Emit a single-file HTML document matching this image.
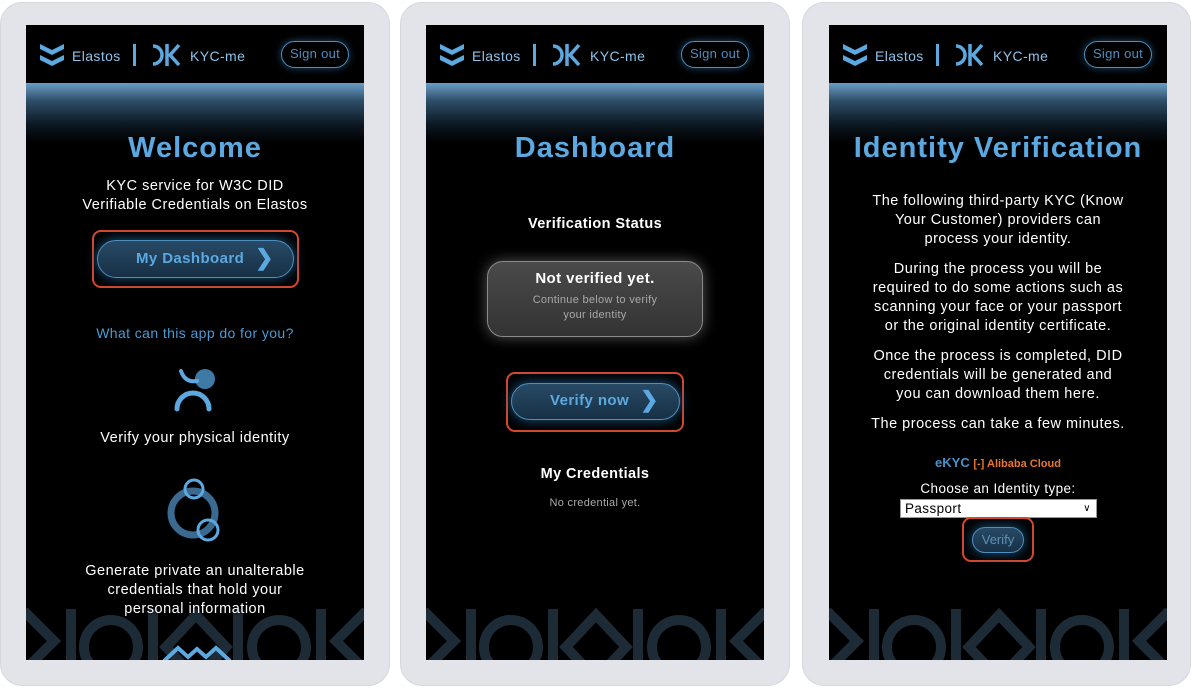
<!DOCTYPE html>
<html><head><meta charset="utf-8"><style>
*{margin:0;padding:0;box-sizing:border-box}
body{width:1194px;height:688px;background:#fff;position:relative;overflow:hidden;font-family:"Liberation Sans",sans-serif}
.card{position:absolute;top:2px;height:684px;background:#e3e4ea;border-radius:22px;border:1px solid #d6d7de}
.scr{position:absolute;top:25px;width:338px;height:635px;background:#000;overflow:hidden;color:#fff}
.band{position:absolute;left:0;top:58px;width:100%;height:60px;background:linear-gradient(#6a9ec6 0%,#2d4d68 30%,#0c1720 70%,#000 100%)}
.hdr{position:absolute;left:0;top:0;width:100%;height:58px;background:#000}
.t{position:absolute;left:0;width:100%;text-align:center;white-space:nowrap}
.title{font-size:29px;color:#5ba9e0;font-weight:bold;letter-spacing:1px}
.p{font-size:14.5px;line-height:19px;letter-spacing:0.5px}
.so{position:absolute;left:255px;top:16px;width:68px;height:27px;border:1.5px solid #4d8fc0;border-radius:14px;color:#4d8fc0;font-size:13px;text-align:center;line-height:24px;box-shadow:0 0 8px #1d4a6e;letter-spacing:0.3px}
.btn{position:absolute;border:1.5px solid #4e8fbf;border-radius:20px;background:linear-gradient(#284a66,#173045);color:#5ba9e0;font-weight:bold;font-size:15px;box-shadow:0 0 12px #1e5a88;letter-spacing:0.4px}
.red{position:absolute;border:2px solid #d6482c;border-radius:9px}
</style></head><body>

<div class="card" style="left:0;width:390px"></div>
<div class="card" style="left:400px;width:390px"></div>
<div class="card" style="left:802px;width:389px"></div>

<div class="scr" style="left:26px">
 <div class="band"></div><div class="hdr"></div>
 <svg style="position:absolute;left:0;top:0" width="338" height="58">
  <g fill="#5ba9e0"><path d="M14 19 l12 6 l12 -6 v5 l-12 6 l-12 -6z"/><path d="M14 30 l12 6 l12 -6 v5 l-12 6 l-12 -6z"/></g>
  <text x="46" y="36" font-size="14" fill="#8fc3ea" font-family="Liberation Sans" letter-spacing="0.4">Elastos</text>
  <rect x="107" y="19" width="3" height="22" fill="#5ba9e0"/>
  <g fill="none" stroke="#5ba9e0" stroke-width="3.5"><path d="M127 21 a9 9 0 0 1 0 18"/><path d="M141 19 v22 M153 20 l-9 10 l9 10"/></g>
  <text x="164" y="36" font-size="14" fill="#8fc3ea" font-family="Liberation Sans" letter-spacing="0.4">KYC-me</text>
 </svg>
 <div class="so">Sign out</div>
 <div class="t title" style="top:107px">Welcome</div>
 <div class="t p" style="top:152px">KYC service for W3C DID<br>Verifiable Credentials on Elastos</div>
 <div class="red" style="left:66px;top:205px;width:207px;height:58px"></div>
 <div class="btn" style="left:71px;top:215px;width:197px;height:38px;line-height:35px;padding-left:38px">My Dashboard <span style="position:absolute;left:157px;top:-1px;font-size:22px">&#x276F;</span></div>
 <div class="t" style="top:300px;font-size:14px;color:#4a9ad4;letter-spacing:0.4px">What can this app do for you?</div>
 <svg style="position:absolute;left:140px;top:340px" width="60" height="50">
  <circle cx="39" cy="14" r="10" fill="#3f7aa6"/>
  <path d="M15 6 q4 12 16 10" fill="none" stroke="#5ba9e0" stroke-width="4" stroke-linecap="round"/>
  <path d="M11 44 a15 15 0 0 1 32 0" fill="none" stroke="#5ba9e0" stroke-width="5" stroke-linecap="round"/>
 </svg>
 <div class="t p" style="top:404px">Verify your physical identity</div>
 <svg style="position:absolute;left:134px;top:452px" width="70" height="72">
  <circle cx="33" cy="36" r="22" fill="none" stroke="#3a6a90" stroke-width="7"/>
  <circle cx="34" cy="12" r="9" fill="none" stroke="#5ba9e0" stroke-width="3"/>
  <circle cx="48" cy="53" r="10" fill="none" stroke="#5ba9e0" stroke-width="3"/>
 </svg>
 <svg style="position:absolute;left:0;top:578px" width="338" height="57"><g fill="none" stroke="#1d2b37" stroke-width="10"><path d="M-2 8 l30 30 l-30 30"/><path d="M45 6 v70"/><circle cx="85" cy="44" r="27"/><path d="M127 6 v70"/><path d="M170 12 l30 32 l-30 32 l-30 -32z"/><path d="M212 6 v70"/><circle cx="253" cy="44" r="27"/><path d="M295 6 v70"/><path d="M340 8 l-30 30 l30 30"/></g></svg>
 <div class="t p" style="top:537px;text-shadow:0 0 3px #000">Generate private an unalterable<br>credentials that hold your<br>personal information</div>
 <svg style="position:absolute;left:136px;top:620px" width="70" height="16"><path d="M2 16 l14 -13 l10 9 l9 -8 l9 8 l10 -9 l14 13" fill="none" stroke="#5ba9e0" stroke-width="4"/></svg>
</div>

<div class="scr" style="left:426px">
 <div class="band"></div><div class="hdr"></div>
 <svg style="position:absolute;left:0;top:0" width="338" height="58">
  <g fill="#5ba9e0"><path d="M14 19 l12 6 l12 -6 v5 l-12 6 l-12 -6z"/><path d="M14 30 l12 6 l12 -6 v5 l-12 6 l-12 -6z"/></g>
  <text x="46" y="36" font-size="14" fill="#8fc3ea" font-family="Liberation Sans" letter-spacing="0.4">Elastos</text>
  <rect x="107" y="19" width="3" height="22" fill="#5ba9e0"/>
  <g fill="none" stroke="#5ba9e0" stroke-width="3.5"><path d="M127 21 a9 9 0 0 1 0 18"/><path d="M141 19 v22 M153 20 l-9 10 l9 10"/></g>
  <text x="164" y="36" font-size="14" fill="#8fc3ea" font-family="Liberation Sans" letter-spacing="0.4">KYC-me</text>
 </svg>
 <div class="so">Sign out</div>
 <div class="t title" style="top:107px">Dashboard</div>
 <div class="t" style="top:191px;font-size:14.5px;font-weight:bold;letter-spacing:0.4px">Verification Status</div>
 <div style="position:absolute;left:61px;top:236px;width:216px;height:76px;border:1.5px solid #8a8a8a;border-radius:16px;background:linear-gradient(#4a4a4a,#333);box-shadow:0 0 14px #555;text-align:center">
  <div style="margin-top:8px;font-size:15px;font-weight:bold;letter-spacing:0.4px">Not verified yet.</div>
  <div style="margin-top:6px;font-size:11px;color:#a8a8a8;line-height:15px;letter-spacing:0.3px">Continue below to verify<br>your identity</div>
 </div>
 <div class="red" style="left:80px;top:347px;width:178px;height:60px"></div>
 <div class="btn" style="left:85px;top:358px;width:169px;height:37px;line-height:34px;padding-left:38px">Verify now <span style="position:absolute;left:128px;top:-1px;font-size:22px">&#x276F;</span></div>
 <div class="t" style="top:441px;font-size:14.5px;font-weight:bold;letter-spacing:0.4px">My Credentials</div>
 <div class="t" style="top:472px;font-size:11px;color:#aaa;letter-spacing:0.3px">No credential yet.</div>
 <svg style="position:absolute;left:0;top:578px" width="338" height="57"><g fill="none" stroke="#1d2b37" stroke-width="10"><path d="M-2 8 l30 30 l-30 30"/><path d="M45 6 v70"/><circle cx="85" cy="44" r="27"/><path d="M127 6 v70"/><path d="M170 12 l30 32 l-30 32 l-30 -32z"/><path d="M212 6 v70"/><circle cx="253" cy="44" r="27"/><path d="M295 6 v70"/><path d="M340 8 l-30 30 l30 30"/></g></svg>
</div>

<div class="scr" style="left:829px">
 <div class="band"></div><div class="hdr"></div>
 <svg style="position:absolute;left:0;top:0" width="338" height="58">
  <g fill="#5ba9e0"><path d="M14 19 l12 6 l12 -6 v5 l-12 6 l-12 -6z"/><path d="M14 30 l12 6 l12 -6 v5 l-12 6 l-12 -6z"/></g>
  <text x="46" y="36" font-size="14" fill="#8fc3ea" font-family="Liberation Sans" letter-spacing="0.4">Elastos</text>
  <rect x="107" y="19" width="3" height="22" fill="#5ba9e0"/>
  <g fill="none" stroke="#5ba9e0" stroke-width="3.5"><path d="M127 21 a9 9 0 0 1 0 18"/><path d="M141 19 v22 M153 20 l-9 10 l9 10"/></g>
  <text x="164" y="36" font-size="14" fill="#8fc3ea" font-family="Liberation Sans" letter-spacing="0.4">KYC-me</text>
 </svg>
 <div class="so">Sign out</div>
 <div class="t title" style="top:107px">Identity Verification</div>
 <div class="t p" style="top:167px">The following third-party KYC (Know<br>Your Customer) providers can<br>process your identity.</div>
 <div class="t p" style="top:235px">During the process you will be<br>required to do some actions such as<br>scanning your face or your passport<br>or the original identity certificate.</div>
 <div class="t p" style="top:322px">Once the process is completed, DID<br>credentials will be generated and<br>you can download them here.</div>
 <div class="t p" style="top:390px">The process can take a few minutes.</div>
 <div class="t" style="top:430px;font-size:13px"><b style="color:#4a90c8">eKYC</b> <span style="color:#e8762c;font-size:11px;font-weight:bold">[-] Alibaba Cloud</span></div>
 <div class="t" style="top:456px;font-size:13.5px;letter-spacing:0.4px">Choose an Identity type:</div>
 <div style="position:absolute;left:71px;top:474px;width:197px;height:19px;background:#fff;border:1px solid #999;color:#000;font-size:13.5px;line-height:17px;padding-left:4px;letter-spacing:0.4px">Passport<span style="position:absolute;right:5px;top:0;font-size:10px">&#x2228;</span></div>
 <div class="red" style="left:133px;top:492px;width:72px;height:45px"></div>
 <div class="btn" style="left:143px;top:502px;width:52px;height:26px;line-height:23px;text-align:center;font-weight:normal;font-size:13px;color:#5e8fb5;letter-spacing:0">Verify</div>
 <svg style="position:absolute;left:0;top:578px" width="338" height="57"><g fill="none" stroke="#1d2b37" stroke-width="10"><path d="M-2 8 l30 30 l-30 30"/><path d="M45 6 v70"/><circle cx="85" cy="44" r="27"/><path d="M127 6 v70"/><path d="M170 12 l30 32 l-30 32 l-30 -32z"/><path d="M212 6 v70"/><circle cx="253" cy="44" r="27"/><path d="M295 6 v70"/><path d="M340 8 l-30 30 l30 30"/></g></svg>
</div>
</body></html>
